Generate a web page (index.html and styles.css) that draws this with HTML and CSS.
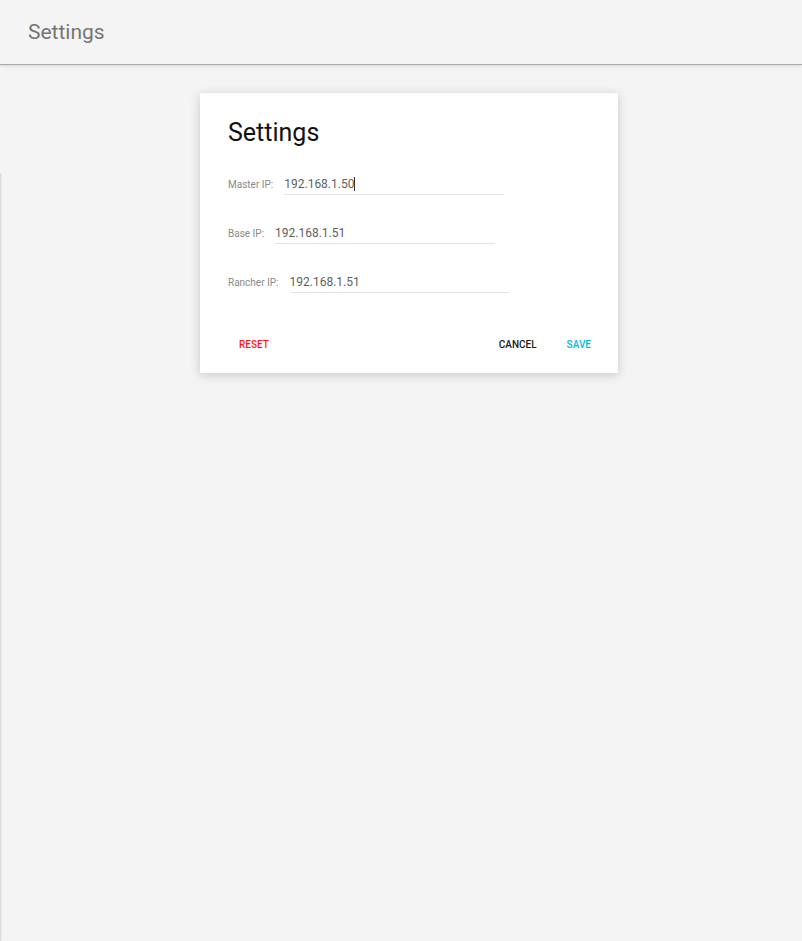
FILE: index.html
```html
<!DOCTYPE html>
<html lang="en">
<head>
    <meta charset="UTF-8">
    <meta name="viewport" content="width=device-width, initial-scale=1.0">
    <title>Settings</title>
    <link rel="stylesheet" href="styles.css">
</head>
<body>
    <header class="app-bar">
        <h1 class="app-title">Settings</h1>
    </header>

    <div class="drawer-edge"></div>

    <main class="content">
        <div class="dialog">
            <h2 class="dialog-title">Settings</h2>
            <div class="dialog-body">
                <div class="field">
                    <span class="field-label">Master IP:</span>
                    <div class="field-input">192.168.1.50<span class="caret"></span></div>
                </div>
                <div class="field">
                    <span class="field-label">Base IP:</span>
                    <div class="field-input">192.168.1.51</div>
                </div>
                <div class="field">
                    <span class="field-label">Rancher IP:</span>
                    <div class="field-input">192.168.1.51</div>
                </div>
            </div>
            <div class="dialog-actions">
                <button class="btn btn-reset">Reset</button>
                <div class="actions-right">
                    <button class="btn btn-cancel">Cancel</button>
                    <button class="btn btn-save">Save</button>
                </div>
            </div>
        </div>
    </main>
</body>
</html>
```

FILE: styles.css
```css
body {
    font-family: Roboto, 'Liberation Sans', sans-serif;
    background-color: #f4f4f4;
    margin: 0;
    min-height: 941px;
}
.app-bar {
    height: 64px;
    background-color: #f4f4f4;
    border-bottom: 1px solid #ababab;
    box-shadow: 0 1px 3px rgba(0, 0, 0, 0.12);
    padding: 0 28px;
}
.app-title {
    margin: 0;
    font-size: 21px;
    font-weight: 400;
    line-height: 64px;
    color: #757575;
}
/* thin edge of the collapsed side drawer */
.drawer-edge {
    position: absolute;
    left: 0;
    top: 173px;
    bottom: 0;
    width: 1px;
    background-color: #dcdcdc;
    box-shadow: 1px 0 2px rgba(0, 0, 0, 0.06);
}
.content {
    padding: 28px 0 0 200px;
}
.dialog {
    width: 418px;
    background-color: white;
    box-shadow: 0 2px 10px rgba(0, 0, 0, 0.18);
}
.dialog-title {
    margin: 0;
    padding: 24px 28px 0;
    font-size: 25px;
    font-weight: 400;
    line-height: 32px;
    color: #111;
}
.dialog-body {
    padding: 25px 28px 0;
    display: flex;
    flex-direction: column;
    gap: 28px;
}
.field {
    display: flex;
    align-items: center;
}
.field-label {
    font-size: 10px;
    color: #8a8a8a;
    margin-right: 11px;
}
.field-input {
    width: 220px;
    height: 20px;
    line-height: 20px;
    font-size: 12px;
    color: #5f5f5f;
    border-bottom: 1px solid #e3e3e3;
}
.caret {
    display: inline-block;
    width: 1px;
    height: 14px;
    background-color: #333;
    vertical-align: -3px;
}
.dialog-actions {
    display: flex;
    justify-content: space-between;
    padding: 33px 16px 11px 28px;
}
.actions-right {
    display: flex;
    gap: 8px;
}
.btn {
    font-family: Roboto, 'Liberation Sans', sans-serif;
    background: none;
    border: none;
    height: 36px;
    padding: 0 11px;
    font-size: 10px;
    font-weight: 500;
    text-transform: uppercase;
    cursor: pointer;
}
.btn-reset {
    color: #ff1a1a;
}
.btn-cancel {
    color: #1a1a1a;
}
.btn-save {
    color: #00bcd4;
}
```
